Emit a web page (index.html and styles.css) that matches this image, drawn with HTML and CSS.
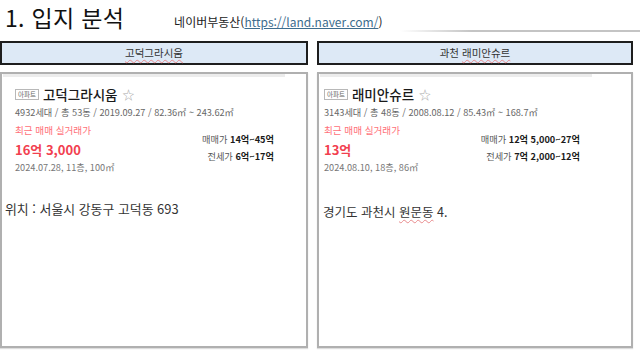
FILE: index.html
```html
<!DOCTYPE html>
<html lang="ko">
<head>
    <meta charset="UTF-8">
    <title>입지 분석</title>
    <link rel="stylesheet" href="styles.css">
</head>
<body>
    <div id="slide">
        <div class="topline"></div>
        <div class="heading">
            <h1>1. 입지 분석</h1>
            <span class="source">네이버부동산(<a href="https://land.naver.com/">https://land.naver.com/</a>)</span>
        </div>

        <div class="columns">
            <div class="column">
                <div class="label"><span class="typo">고덕그라시움</span></div>
                <div class="card">
                    <div class="snippet">
                        <div class="nameRow">
                            <span class="badge">아파트</span>
                            <span class="name">고덕그라시움</span>
                            <span class="star">☆</span>
                        </div>
                        <div class="info">4932세대 / 총 53동 / 2019.09.27 / 82.36㎡ ~ 243.62㎡</div>
                        <div class="priceRow">
                            <div class="recent">
                                <div class="recentLabel">최근 매매 실거래가</div>
                                <div class="recentPrice">16억 3,000</div>
                                <div class="recentMeta">2024.07.28, 11층, 100㎡</div>
                            </div>
                            <div class="ranges">
                                <div>매매가 <b>14억~45억</b></div>
                                <div>전세가 <b>6억~17억</b></div>
                            </div>
                        </div>
                    </div>
                    <p class="address">위치 : 서울시 강동구 고덕동 693</p>
                </div>
            </div>

            <div class="column">
                <div class="label">과천 <span class="typo">래미안슈르</span></div>
                <div class="card">
                    <div class="snippet narrow">
                        <div class="nameRow">
                            <span class="badge">아파트</span>
                            <span class="name">래미안슈르</span>
                            <span class="star">☆</span>
                        </div>
                        <div class="info">3143세대 / 총 48동 / 2008.08.12 / 85.43㎡ ~ 168.7㎡</div>
                        <div class="priceRow">
                            <div class="recent">
                                <div class="recentLabel">최근 매매 실거래가</div>
                                <div class="recentPrice">13억</div>
                                <div class="recentMeta">2024.08.10, 18층, 86㎡</div>
                            </div>
                            <div class="ranges">
                                <div>매매가 <b>12억 5,000~27억</b></div>
                                <div>전세가 <b>7억 2,000~12억</b></div>
                            </div>
                        </div>
                    </div>
                    <p class="address second">경기도 과천시 <span class="typo">원문동</span> 4.</p>
                </div>
            </div>
        </div>
    </div>
</body>
</html>
```

FILE: styles.css
```css
body {
    margin: 0;
    padding: 0;
    background: #ffffff;
    font-family: "Noto Sans CJK KR", "Noto Sans", sans-serif;
    color: #222222;
}

#slide {
    position: relative;
    width: 640px;
    height: 358px;
}

/* faint rule at the top right of the slide */
.topline {
    position: absolute;
    left: 400px;
    right: 0;
    top: 30px;
    height: 2px;
    background: linear-gradient(to right, rgba(190, 190, 190, 0), #c4c4c4 30%);
}

.heading {
    display: flex;
    align-items: baseline;
    height: 39px;
    padding: 2px 0 0 5px;
}

h1 {
    margin: 0;
    font-size: 23px;
    font-weight: 400;
    line-height: 30px;
    letter-spacing: 0.3px;
    color: #111111;
}

.source {
    margin-left: 50px;
    font-size: 12px;
    color: #222222;
}

.source a {
    color: #3d6d8e;
    text-decoration: underline;
}

.columns {
    display: grid;
    grid-template-columns: 308px 316px;
    column-gap: 9px;
}

.label {
    height: 20px;
    border: 2px solid #1e1e1e;
    background: #dde9f6;
    text-align: center;
    font-size: 10.5px;
    line-height: 20px;
    color: #333333;
}

.typo {
    text-decoration: underline wavy #e88a8c;
    text-decoration-thickness: 1px;
    text-underline-offset: 2px;
}

.card {
    height: 272px;
    margin-top: 7px;
    border: 2px solid #b0b0b0;
    box-shadow: 0 1px 1px #dddddd;
}

.snippet {
    width: 259px;
    margin-left: 1px;
    padding: 7px 11px 0 12px;
    border-top: 3px solid #ececec;
}

.snippet.narrow {
    width: 256px;
    padding-left: 4px;
    padding-right: 12px;
}

.nameRow {
    display: flex;
    align-items: center;
    height: 20px;
}

.badge {
    padding: 0 2px;
    border: 1px solid #b8b8b8;
    font-size: 6.5px;
    line-height: 9px;
    color: #666666;
}

.name {
    margin-left: 4px;
    font-size: 13.5px;
    font-weight: 500;
    color: #1a1a1a;
}

.star {
    margin-left: 5px;
    font-size: 12px;
    color: #aaaaaa;
}

.info {
    margin-top: 1px;
    font-size: 9.2px;
    color: #666666;
    white-space: nowrap;
}

.priceRow {
    display: flex;
    justify-content: space-between;
    margin-top: 5px;
}

.recentLabel {
    font-size: 9.6px;
    line-height: 13px;
    color: #ff7078;
}

.recentPrice {
    margin-top: 4px;
    font-size: 13px;
    line-height: 18px;
    font-weight: 700;
    color: #f2404f;
}

.recentMeta {
    margin-top: 2px;
    font-size: 9.2px;
    line-height: 13px;
    color: #777777;
}

.ranges {
    padding-top: 7px;
    text-align: right;
    font-size: 9.2px;
    line-height: 17px;
    color: #555555;
}

.ranges b {
    color: #1a1a1a;
}

.address {
    margin: 25px 0 0 3px;
    font-size: 12.9px;
    color: #333333;
}

.address.second {
    margin-top: 28px;
    margin-left: 4px;
    font-size: 12.5px;
}
```
